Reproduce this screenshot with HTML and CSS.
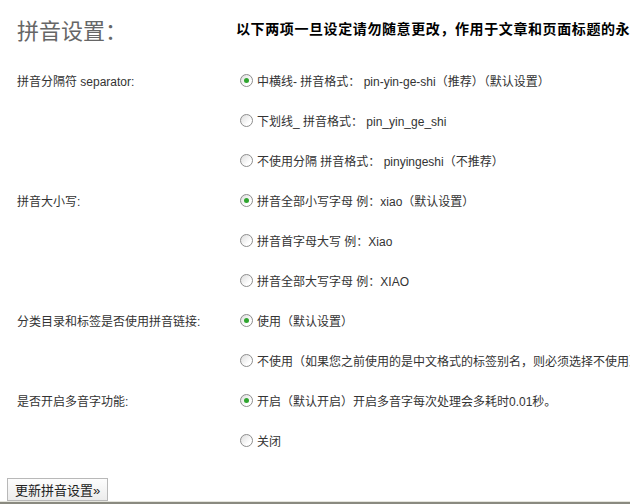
FILE: index.html
```html
<!DOCTYPE html>
<html lang="zh-CN">
<head>
    <meta charset="UTF-8">
    <title>拼音设置</title>
    <link rel="stylesheet" href="styles.css">
</head>
<body>
    <div class="wrap">
        <div class="head">
            <h2>拼音设置：</h2>
            <p class="notice">以下两项一旦设定请勿随意更改，作用于文章和页面标题的永久链接</p>
        </div>

        <form class="form-table">
            <div class="row">
                <div class="label">拼音分隔符 separator:</div>
                <div class="opts">
                    <label><input type="radio" name="sep" checked> 中横线- 拼音格式： pin-yin-ge-shi（推荐）（默认设置）</label>
                </div>
            </div>
            <div class="row">
                <div class="label"></div>
                <div class="opts">
                    <label><input type="radio" name="sep"> 下划线_ 拼音格式： pin_yin_ge_shi</label>
                </div>
            </div>
            <div class="row">
                <div class="label"></div>
                <div class="opts">
                    <label><input type="radio" name="sep"> 不使用分隔 拼音格式： pinyingeshi（不推荐）</label>
                </div>
            </div>

            <div class="row">
                <div class="label">拼音大小写:</div>
                <div class="opts">
                    <label><input type="radio" name="case" checked> 拼音全部小写字母 例：xiao（默认设置）</label>
                </div>
            </div>
            <div class="row">
                <div class="label"></div>
                <div class="opts">
                    <label><input type="radio" name="case"> 拼音首字母大写 例：Xiao</label>
                </div>
            </div>
            <div class="row">
                <div class="label"></div>
                <div class="opts">
                    <label><input type="radio" name="case"> 拼音全部大写字母 例：XIAO</label>
                </div>
            </div>

            <div class="row">
                <div class="label">分类目录和标签是否使用拼音链接:</div>
                <div class="opts">
                    <label><input type="radio" name="link" checked> 使用（默认设置）</label>
                </div>
            </div>
            <div class="row">
                <div class="label"></div>
                <div class="opts">
                    <label><input type="radio" name="link"> 不使用（如果您之前使用的是中文格式的标签别名，则必须选择不使用）</label>
                </div>
            </div>

            <div class="row">
                <div class="label">是否开启多音字功能:</div>
                <div class="opts">
                    <label><input type="radio" name="poly" checked> 开启（默认开启）开启多音字每次处理会多耗时0.01秒。</label>
                </div>
            </div>
            <div class="row">
                <div class="label"></div>
                <div class="opts">
                    <label><input type="radio" name="poly"> 关闭</label>
                </div>
            </div>

            <div class="submit">
                <button type="button">更新拼音设置»</button>
            </div>
        </form>
    </div>
    <div class="footer"></div>
</body>
</html>
```

FILE: styles.css
```css
body {
    margin: 0;
    font-family: "Liberation Sans", "Noto Sans CJK SC", sans-serif;
    font-size: 12px;
    color: #333;
    background-color: #fff;
    overflow: hidden;
    height: 504px;
    display: flex;
    flex-direction: column;
}
.wrap {
    flex: 1;
    white-space: nowrap;
    overflow: hidden;
}
.head {
    display: flex;
    align-items: center;
    height: 60px;
}
.head h2 {
    flex-shrink: 0;
    width: 219px;
    margin: 0 0 0 17px;
    font-size: 22px;
    font-weight: normal;
    color: #666;
    padding-bottom: 2px;
}
.notice {
    margin: 0;
    font-size: 14px;
    font-weight: bold;
    letter-spacing: 0.6px;
    color: #000;
    padding-bottom: 4px;
}
.row {
    display: flex;
    align-items: center;
    height: 40px;
}
.label {
    flex-shrink: 0;
    width: 223px;
    padding-left: 17px;
    color: #333;
}
.opts label {
    display: flex;
    align-items: center;
    gap: 4px;
    color: #333;
}
input[type="radio"] {
    appearance: none;
    -webkit-appearance: none;
    flex-shrink: 0;
    width: 13px;
    height: 13px;
    margin: 0;
    border: 1px solid #8d8d8d;
    border-radius: 50%;
    background: linear-gradient(135deg, #dcdcdc, #fff 70%);
    display: grid;
    place-items: center;
}
input[type="radio"]:checked::after {
    content: "";
    width: 5px;
    height: 5px;
    border-radius: 50%;
    background-color: #2fa52f;
}
.submit {
    padding: 18px 0 0 7px;
}
.submit button {
    font-family: "Liberation Sans", "Noto Sans CJK SC", sans-serif;
    font-size: 13px;
    color: #222;
    height: 23px;
    padding: 0 7px;
    border: 1px solid #b8b8b8;
    background: linear-gradient(#fdfdfd, #ececec);
    cursor: pointer;
}
.footer {
    height: 2px;
    border-top: 1px solid #e4e4dc;
    background-color: #8a8a80;
}
```
